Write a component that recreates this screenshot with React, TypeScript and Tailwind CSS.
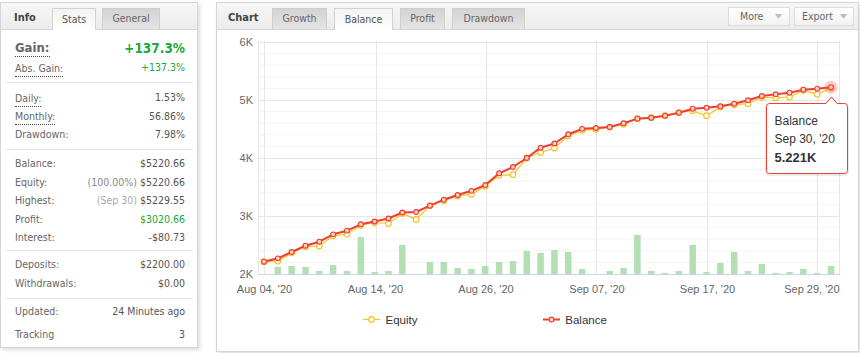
import React from "react";

const balance = [
  2212, 2270, 2379, 2488, 2557, 2684, 2747, 2857, 2905, 2957, 3060, 3069, 3178, 3281, 3362, 3434, 3534, 3736,
  3845, 4000, 4178, 4250, 4409, 4503, 4517, 4534, 4598, 4678, 4695, 4729, 4781, 4850, 4867, 4891, 4936, 4995,
  5069, 5098, 5126, 5178, 5195, 5220.66,
];

const equity = [
  2212, 2223, 2362, 2471, 2483, 2658, 2690, 2840, 2888, 2871, 3043, 2940, 3178, 3264, 3345, 3374, 3512, 3702,
  3712, 4000, 4095, 4172, 4383, 4477, 4495, 4534, 4581, 4678, 4695, 4729, 4781, 4816, 4729, 4879, 4919, 4936,
  5047, 5039, 5052, 5166, 5098, 5209,
];

// daily bar heights in px (separate axis)
const bars = [
  0, 7, 8, 7, 3, 9, 3, 37, 2, 3, 29, 0, 12, 12, 6, 5, 8, 12, 13, 23, 21, 24, 22, 5, 0, 3, 6, 39, 3, 1, 3, 29, 2,
  11, 22, 3, 10, 1, 2, 5, 1, 8,
];

const STEP = (831 - 264) / 41;
const px = (i: number) => 264 + i * STEP;
const py = (v: number) => 274 - (v - 2000) * 0.058;

const majors = [
  { y: 42, label: "6K" },
  { y: 100, label: "5K" },
  { y: 158, label: "4K" },
  { y: 216, label: "3K" },
  { y: 274, label: "2K" },
];
const minors = Array.from({ length: 19 }, (_, k) => k + 1).filter((k) => k % 5 !== 0);
const vLines = [264, 376, 486, 596, 707, 817];
const xLabels = [
  { x: 264.5, t: "Aug 04, '20" },
  { x: 375.5, t: "Aug 14, '20" },
  { x: 486, t: "Aug 26, '20" },
  { x: 597, t: "Sep 07, '20" },
  { x: 707.5, t: "Sep 17, '20" },
];

const RED = "#ee3d31";
const YEL = "#f7c21f";

function Tab({ label, w, active }: { label: string; w: string; active?: boolean }) {
  return (
    <div
      className={
        active
          ? `${w} h-[22px] -mb-px flex items-center justify-center border border-b-0 border-[#d2d2d2] bg-linear-to-b from-[#f3f3f3] to-white text-[#555]`
          : `${w} h-[21px] flex items-center justify-center border border-b-0 border-[#cfcfcf] bg-linear-to-b from-[#d3d3d3] to-[#e4e4e4] text-[#666]`
      }
    >
      {label}
    </div>
  );
}

function Row({
  label,
  value,
  note,
  noteColor,
  dotted,
  green,
  h = "h-[18.5px]",
}: {
  label: string;
  value: string;
  note?: string;
  noteColor?: string;
  dotted?: boolean;
  green?: boolean;
  h?: string;
}) {
  return (
    <div className={`${h} flex items-center justify-between pl-[10px] pr-[8px]`}>
      <span className={dotted ? "leading-[16px] border-b border-dotted border-[#444] text-[#666]" : "text-[#666]"}>
        {label}
      </span>
      <span className={green ? "text-[#1ea83c]" : "text-[#555]"}>
        {note ? <span className={noteColor}>{note} </span> : null}
        {value}
      </span>
    </div>
  );
}

function InfoPanel() {
  return (
    <div className="w-[198px] h-[346px] shrink-0 flex flex-col border border-[#d5d5d5] bg-white shadow-[2px_2px_4px_rgba(0,0,0,0.14)]">
      <div className="h-[27px] shrink-0 flex items-end border-b border-[#d5d5d5] bg-linear-to-b from-[#f6f6f6] to-[#ececec] pl-[13px]">
        <span className="self-center pt-[4px] w-[38px] text-[11px] font-bold text-[#444]">Info</span>
        <div className="flex gap-[6px]">
          <Tab label="Stats" w="w-[44px]" active />
          <Tab label="General" w="w-[58px]" />
        </div>
      </div>

      <div className="flex flex-col px-[4px]">
        <div className="pt-[8px] pb-[3.5px] border-b border-[#e6e6e6]">
          <div className="h-[20px] flex items-center justify-between pl-[10px] pr-[8px]">
            <span className="text-[13px] leading-[17px] font-bold text-[#666] border-b border-dotted border-[#444]">
              Gain:
            </span>
            <span className="text-[13.5px] font-bold text-[#1ea83c]">+137.3%</span>
          </div>
          <Row h="h-[20px]" label="Abs. Gain:" value="+137.3%" dotted green />
        </div>

        <div className="pt-[6.25px] pb-[5px] border-b border-[#e6e6e6]">
          <Row label="Daily:" value="1.53%" dotted />
          <Row label="Monthly:" value="56.86%" dotted />
          <Row label="Drawdown:" value="7.98%" />
        </div>

        <div className="pt-[4.5px] pb-[2.75px] border-b border-[#e6e6e6]">
          <Row label="Balance:" value="$5220.66" />
          <Row label="Equity:" value="$5220.66" note="(100.00%)" noteColor="text-[#8a8a8a]" />
          <Row label="Highest:" value="$5229.55" note="(Sep 30)" noteColor="text-[#a8a8a8]" />
          <Row label="Profit:" value="$3020.66" green />
          <Row label="Interest:" value="-$80.73" />
        </div>

        <div className="pt-[4.75px] pb-[5px] border-b border-[#e6e6e6]">
          <Row label="Deposits:" value="$2200.00" />
          <Row label="Withdrawals:" value="$0.00" />
        </div>

        <div className="pt-[4px] flex flex-col gap-[4px]">
          <Row label="Updated:" value="24 Minutes ago" />
          <Row label="Tracking" value="3" />
        </div>
      </div>
    </div>
  );
}

function Caret() {
  return (
    <svg width="7" height="5" viewBox="0 0 7 5" className="shrink-0">
      <polygon points="0,0 7,0 3.5,5" fill="#bdbdbd" />
    </svg>
  );
}

function Chart() {
  const bPts = balance.map((v, i) => `${px(i)},${py(v)}`).join(" ");
  const ePts = equity.map((v, i) => `${px(i)},${py(v)}`).join(" ");
  const lx = px(41);
  const ly = py(balance[41]);

  return (
    <svg
      width="641"
      height="320"
      viewBox="217 30 641 320"
      className="block"
      fontFamily="'Liberation Sans', Arial, sans-serif"
    >
      {minors.map((k) => (
        <line key={k} x1={258} x2={839} y1={42 + k * 11.6} y2={42 + k * 11.6} stroke="#f3f3f3" />
      ))}
      {majors.slice(0, 4).map((m) => (
        <line key={m.y} x1={258} x2={839} y1={m.y + 0.5} y2={m.y + 0.5} stroke="#e6e6e6" />
      ))}
      {[258, ...vLines, 839].map((x) => (
        <line key={x} x1={x + 0.5} x2={x + 0.5} y1={41} y2={274} stroke="#e6e6e6" />
      ))}
      <line x1={258} x2={840} y1={274.5} y2={274.5} stroke="#ccd6eb" />

      {majors.map((m) => (
        <text key={m.label} x={253} y={m.y + 4} textAnchor="end" fontSize="11" fill="#666">
          {m.label}
        </text>
      ))}
      {xLabels.map((l) => (
        <text key={l.t} x={l.x} y={293} textAnchor="middle" fontSize="11" fill="#666">
          {l.t}
        </text>
      ))}
      <text x={839.5} y={293} textAnchor="end" fontSize="11" fill="#666">
        Sep 29, '20
      </text>

      {bars.map((h, i) =>
        h > 0 ? <rect key={i} x={px(i) - 3.25} y={274 - h} width={6.5} height={h} fill="#b3dfb3" /> : null,
      )}

      <polyline points={ePts} fill="none" stroke={YEL} strokeWidth="1.2" />
      {equity.map((v, i) => (
        <circle key={i} cx={px(i)} cy={py(v)} r="2.8" fill="#fff" stroke={YEL} strokeWidth="1.2" />
      ))}

      <polyline points={bPts} fill="none" stroke={RED} strokeWidth="2" strokeLinejoin="round" />
      <circle cx={lx} cy={ly} r="6.5" fill={RED} fillOpacity="0.25" />
      {balance.map((v, i) => (
        <circle key={i} cx={px(i)} cy={py(v)} r="2.4" fill="#ffd0cc" stroke={RED} strokeWidth="1.1" />
      ))}

      {/* tooltip */}
      <path
        d="M769.5 104.5 L826 104.5 L831.5 98 L837 104.5 L844.5 104.5 Q847.5 104.5 847.5 107.5 L847.5 171.5 Q847.5 174.5 844.5 174.5 L769.5 174.5 Q766.5 174.5 766.5 171.5 L766.5 107.5 Q766.5 104.5 769.5 104.5 Z"
        fill="none"
        stroke="rgba(0,0,0,0.08)"
        strokeWidth="3"
      />
      <path
        d="M769.5 103.5 L826 103.5 L831.5 97 L837 103.5 L844.5 103.5 Q847.5 103.5 847.5 106.5 L847.5 170.5 Q847.5 173.5 844.5 173.5 L769.5 173.5 Q766.5 173.5 766.5 170.5 L766.5 106.5 Q766.5 103.5 769.5 103.5 Z"
        fill="rgba(255,255,255,0.96)"
        stroke={RED}
      />
      <text x={774.5} y={124.5} fontSize="12" fill="#333">
        Balance
      </text>
      <text x={774.5} y={142.8} fontSize="12" fill="#333">
        Sep 30, '20
      </text>
      <text x={774.5} y={161.5} fontSize="13" fontWeight="bold" fill="#333">
        5.221K
      </text>

      {/* legend */}
      <line x1={363} x2={380} y1={319.5} y2={319.5} stroke={YEL} strokeWidth="1.2" />
      <circle cx={371.5} cy={319.5} r="2.8" fill="#fff" stroke={YEL} strokeWidth="1.2" />
      <text x={385.5} y={323.5} fontSize="11.5" fill="#333">
        Equity
      </text>
      <line x1={543} x2={560} y1={319.5} y2={319.5} stroke={RED} strokeWidth="2" />
      <circle cx={551.5} cy={319.5} r="2.4" fill="#ffd0cc" stroke={RED} strokeWidth="1.1" />
      <text x={565.3} y={323.5} fontSize="11.5" fill="#333">
        Balance
      </text>
    </svg>
  );
}

function ChartPanel() {
  return (
    <div className="w-[643px] h-[350px] shrink-0 flex flex-col border border-[#d5d5d5] bg-white shadow-[2px_2px_4px_rgba(0,0,0,0.14)]">
      <div className="h-[27px] shrink-0 flex items-end border-b border-[#d5d5d5] bg-linear-to-b from-[#f6f6f6] to-[#ececec] pl-[11px] pr-[4px]">
        <span className="self-center pt-[4px] w-[44px] text-[11px] font-bold text-[#444]">Chart</span>
        <div className="flex gap-[7px]">
          <Tab label="Growth" w="w-[55px]" />
          <Tab label="Balance" w="w-[59px]" active />
          <Tab label="Profit" w="w-[45px]" />
          <Tab label="Drawdown" w="w-[73px]" />
        </div>
        <div className="ml-auto self-start mt-[4px] flex gap-[4px] text-[#666]">
          <div className="w-[62px] h-[19px] flex items-center justify-between pl-[11px] pr-[7px] border border-[#dcdcdc] bg-linear-to-b from-white to-[#f2f2f2]">
            <span>More</span>
            <Caret />
          </div>
          <div className="w-[60px] h-[19px] flex items-center justify-between pl-[7px] pr-[6px] border border-[#dcdcdc] bg-linear-to-b from-white to-[#f2f2f2]">
            <span>Export</span>
            <Caret />
          </div>
        </div>
      </div>
      <Chart />
    </div>
  );
}

export default function App() {
  return (
    <div className="w-[860px] h-[353px] overflow-hidden bg-white pt-[2px] flex items-start gap-[18px] font-['DejaVu_Sans_Condensed','DejaVu_Sans',sans-serif] text-[10.5px]">
      <InfoPanel />
      <ChartPanel />
    </div>
  );
}
